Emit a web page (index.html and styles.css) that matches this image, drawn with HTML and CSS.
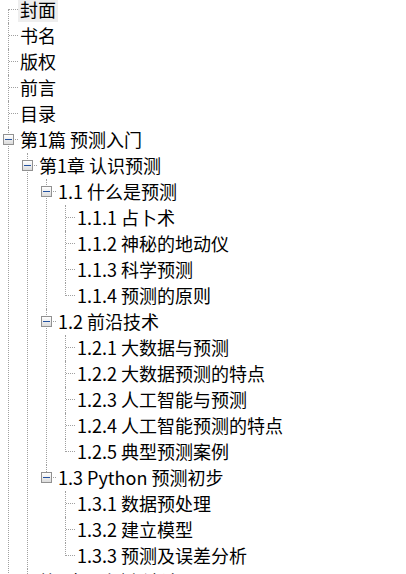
FILE: index.html
```html
<!DOCTYPE html>
<html lang="zh-CN">
<head>
<meta charset="utf-8">
<title>目录树</title>
<link rel="stylesheet" href="styles.css">
</head>
<body>
<ul class="tree">
  <li class="first"><div class="row"><span class="label selected">封面</span></div></li>
  <li><div class="row"><span class="label">书名</span></div></li>
  <li><div class="row"><span class="label">版权</span></div></li>
  <li><div class="row"><span class="label">前言</span></div></li>
  <li><div class="row"><span class="label">目录</span></div></li>
  <li>
    <div class="row"><span class="box minus"></span><span class="label">第1篇 预测入门</span></div>
    <ul>
      <li>
        <div class="row"><span class="box minus"></span><span class="label">第1章 认识预测</span></div>
        <ul>
          <li>
            <div class="row"><span class="box minus"></span><span class="label">1.1 什么是预测</span></div>
            <ul>
              <li><div class="row"><span class="label">1.1.1 占卜术</span></div></li>
              <li><div class="row"><span class="label">1.1.2 神秘的地动仪</span></div></li>
              <li><div class="row"><span class="label">1.1.3 科学预测</span></div></li>
              <li class="last"><div class="row"><span class="label">1.1.4 预测的原则</span></div></li>
            </ul>
          </li>
          <li>
            <div class="row"><span class="box minus"></span><span class="label">1.2 前沿技术</span></div>
            <ul>
              <li><div class="row"><span class="label">1.2.1 大数据与预测</span></div></li>
              <li><div class="row"><span class="label">1.2.2 大数据预测的特点</span></div></li>
              <li><div class="row"><span class="label">1.2.3 人工智能与预测</span></div></li>
              <li><div class="row"><span class="label">1.2.4 人工智能预测的特点</span></div></li>
              <li class="last"><div class="row"><span class="label">1.2.5 典型预测案例</span></div></li>
            </ul>
          </li>
          <li class="last">
            <div class="row"><span class="box minus"></span><span class="label">1.3 Python 预测初步</span></div>
            <ul>
              <li><div class="row"><span class="label">1.3.1 数据预处理</span></div></li>
              <li><div class="row"><span class="label">1.3.2 建立模型</span></div></li>
              <li class="last"><div class="row"><span class="label">1.3.3 预测及误差分析</span></div></li>
            </ul>
          </li>
        </ul>
      </li>
      <li class="last"><div class="row"><span class="box plus"></span><span class="label">第2章 预测方法论</span></div></li>
    </ul>
  </li>
  <li class="last"><div class="row"><span class="box plus"></span><span class="label">第2篇 预测算法</span></div></li>
</ul>
</body>
</html>
```
FILE: styles.css
```css
* {
  box-sizing: border-box;
}

html, body {
  height: 100%;
}

body {
  margin: 0;
  background: #ffffff;
  color: #000000;
  font-family: "Noto Sans CJK SC", "Noto Sans", sans-serif;
  font-size: 18px;
  overflow: hidden;
}

.tree,
.tree ul {
  list-style: none;
  margin: 0;
  padding: 0;
}

.tree {
  margin-top: -3px;
}

.tree ul {
  padding-left: 19px;
}

.tree li {
  position: relative;
}

.tree li::before {
  content: "";
  position: absolute;
  left: 8px;
  top: 0;
  bottom: 0;
  border-left: 1px dotted #a0a0a0;
}

.tree li.first::before {
  top: 12px;
}

.tree li.last::before {
  bottom: auto;
  height: 13px;
}

.tree li.first.last::before {
  height: 1px;
}

.row {
  position: relative;
  height: 26px;
  display: flex;
  align-items: flex-start;
  padding-left: 18px;
  white-space: nowrap;
}

.row::before {
  content: "";
  position: absolute;
  left: 9px;
  top: 12px;
  width: 9px;
  border-top: 1px dotted #a0a0a0;
}

.label {
  display: block;
  margin-top: 1px;
  height: 24px;
  padding: 0 2px;
  line-height: 22px;
}

.label.selected {
  background: #eeeeee;
}

.box {
  position: absolute;
  z-index: 1;
  left: 3px;
  top: 7px;
  width: 11px;
  height: 11px;
  border: 1px solid #919191;
  background: linear-gradient(#ffffff, #dcdcdc);
}

.box::after {
  content: "";
  position: absolute;
  left: 1px;
  top: 4px;
  width: 7px;
  height: 1px;
  background: #2452a0;
}

.box.plus::before {
  content: "";
  position: absolute;
  left: 4px;
  top: 1px;
  width: 1px;
  height: 7px;
  background: #2452a0;
}
```
